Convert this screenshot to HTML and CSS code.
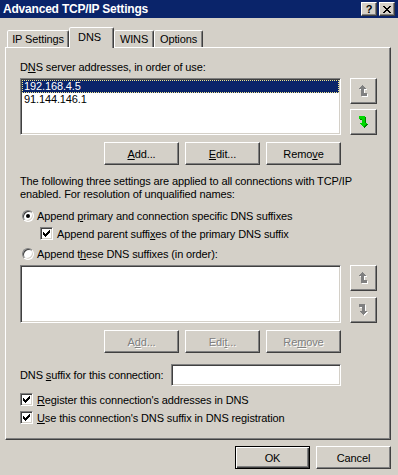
FILE: index.html
```html
<!DOCTYPE html>
<html lang="en">
<head>
  <meta charset="UTF-8">
  <title>Advanced TCP/IP Settings</title>
  <link rel="stylesheet" href="styles.css">
</head>
<body>
  <div class="dialog">
    <!-- Caption -->
    <div class="titlebar">
      <span class="title">Advanced TCP/IP Settings</span>
      <div class="caption-btns">
        <span class="cap-btn raised">?</span>
        <span class="cap-btn raised">
          <svg width="8" height="7" viewBox="0 0 8 7" shape-rendering="crispEdges"><path fill="#000" d="M0 0h2v1h-2zM6 0h2v1h-2zM1 1h2v1h-2zM5 1h2v1h-2zM2 2h4v1h-4zM3 3h2v1h-2zM2 4h4v1h-4zM1 5h2v1h-2zM5 5h2v1h-2zM0 6h2v1h-2zM6 6h2v1h-2z"/></svg>
        </span>
      </div>
    </div>

    <!-- Tabs -->
    <div class="tabs">
      <div class="tab tab-ip">IP Settings</div>
      <div class="tab tab-dns active">DNS</div>
      <div class="tab tab-wins">WINS</div>
      <div class="tab tab-opt">Options</div>
    </div>

    <div class="panel">
      <div class="label">D<u>N</u>S server addresses, in order of use:</div>
      <div class="list-row">
        <div class="listbox sunken">
          <div class="item selected">192.168.4.5</div>
          <div class="item">91.144.146.1</div>
        </div>
        <div class="arrows">
          <div class="arrow-btn raised">
            <svg width="9" height="12" viewBox="0 0 9 12" shape-rendering="crispEdges">
              <path fill="#fff" transform="translate(1 1)" d="M3 0h1v1h-1zM2 1h3v1h-3zM1 2h5v1h-5zM0 3h7v1h-7zM2 4h3v7h-3zM5 8h3v3h-3z"/>
              <path fill="#808080" d="M3 0h1v1h-1zM2 1h3v1h-3zM1 2h5v1h-5zM0 3h7v1h-7zM2 4h3v7h-3zM5 8h3v3h-3z"/>
            </svg>
          </div>
          <div class="arrow-btn raised">
            <svg width="9" height="12" viewBox="0 0 9 12" shape-rendering="crispEdges">
              <path fill="#008000" transform="translate(1 1) rotate(180 4 5.5)" d="M3 0h1v1h-1zM2 1h3v1h-3zM1 2h5v1h-5zM0 3h7v1h-7zM2 4h3v7h-3zM5 8h3v3h-3z"/>
              <path fill="#00d800" transform="rotate(180 4 5.5)" d="M3 0h1v1h-1zM2 1h3v1h-3zM1 2h5v1h-5zM0 3h7v1h-7zM2 4h3v7h-3zM5 8h3v3h-3z"/>
            </svg>
          </div>
        </div>
      </div>
      <div class="btn-row">
        <div class="btn raised"><u>A</u>dd...</div>
        <div class="btn raised"><u>E</u>dit...</div>
        <div class="btn raised">Remo<u>v</u>e</div>
      </div>

      <p class="note">The following three settings are applied to all connections with TCP/IP enabled. For resolution of unqualified names:</p>

      <div class="opt opt-radio">
        <span class="radio checked"></span>
        <span>Append <u>p</u>rimary and connection specific DNS suffixes</span>
      </div>
      <div class="opt opt-sub">
        <span class="check sunken">
          <svg width="7" height="7" viewBox="0 0 7 7" shape-rendering="crispEdges"><path d="M6 0h1v1h-1zM5 1h2v1h-2zM0 2h1v1h-1zM4 2h3v1h-3zM0 3h2v1h-2zM3 3h3v1h-3zM0 4h5v1h-5zM1 5h3v1h-3zM2 6h1v1h-1z"/></svg>
        </span>
        <span>Append parent suffi<u>x</u>es of the primary DNS suffix</span>
      </div>
      <div class="opt opt-radio opt-gap">
        <span class="radio"></span>
        <span>Append t<u>h</u>ese DNS suffixes (in order):</span>
      </div>

      <div class="list-row list-row-2">
        <div class="listbox listbox-2 sunken"></div>
        <div class="arrows arrows-2">
          <div class="arrow-btn raised">
            <svg width="9" height="12" viewBox="0 0 9 12" shape-rendering="crispEdges">
              <path fill="#fff" transform="translate(1 1)" d="M3 0h1v1h-1zM2 1h3v1h-3zM1 2h5v1h-5zM0 3h7v1h-7zM2 4h3v7h-3zM5 8h3v3h-3z"/>
              <path fill="#808080" d="M3 0h1v1h-1zM2 1h3v1h-3zM1 2h5v1h-5zM0 3h7v1h-7zM2 4h3v7h-3zM5 8h3v3h-3z"/>
            </svg>
          </div>
          <div class="arrow-btn raised">
            <svg width="9" height="12" viewBox="0 0 9 12" shape-rendering="crispEdges">
              <path fill="#fff" transform="translate(1 1) rotate(180 4 5.5)" d="M3 0h1v1h-1zM2 1h3v1h-3zM1 2h5v1h-5zM0 3h7v1h-7zM2 4h3v7h-3zM5 8h3v3h-3z"/>
              <path fill="#808080" transform="rotate(180 4 5.5)" d="M3 0h1v1h-1zM2 1h3v1h-3zM1 2h5v1h-5zM0 3h7v1h-7zM2 4h3v7h-3zM5 8h3v3h-3z"/>
            </svg>
          </div>
        </div>
      </div>
      <div class="btn-row">
        <div class="btn raised disabled">A<u>d</u>d...</div>
        <div class="btn raised disabled">Edi<u>t</u>...</div>
        <div class="btn raised disabled">Re<u>m</u>ove</div>
      </div>

      <div class="suffix-row">
        <span>DNS <u>s</u>uffix for this connection:</span>
        <div class="textbox sunken"></div>
      </div>

      <div class="opt opt-check">
        <span class="check sunken">
          <svg width="7" height="7" viewBox="0 0 7 7" shape-rendering="crispEdges"><path d="M6 0h1v1h-1zM5 1h2v1h-2zM0 2h1v1h-1zM4 2h3v1h-3zM0 3h2v1h-2zM3 3h3v1h-3zM0 4h5v1h-5zM1 5h3v1h-3zM2 6h1v1h-1z"/></svg>
        </span>
        <span><u>R</u>egister this connection's addresses in DNS</span>
      </div>
      <div class="opt opt-check opt-check-2">
        <span class="check sunken">
          <svg width="7" height="7" viewBox="0 0 7 7" shape-rendering="crispEdges"><path d="M6 0h1v1h-1zM5 1h2v1h-2zM0 2h1v1h-1zM4 2h3v1h-3zM0 3h2v1h-2zM3 3h3v1h-3zM0 4h5v1h-5zM1 5h3v1h-3zM2 6h1v1h-1z"/></svg>
        </span>
        <span><u>U</u>se this connection's DNS suffix in DNS registration</span>
      </div>
    </div>

    <div class="footer">
      <div class="btn default">OK</div>
      <div class="btn raised">Cancel</div>
    </div>
  </div>
</body>
</html>
```

FILE: styles.css
```css
/* Classic dialog look */
* {
  box-sizing: border-box;
}

body {
  margin: 0;
  font-family: "Liberation Sans", Arial, sans-serif;
  font-size: 11px;
  letter-spacing: -0.12px;
  color: #000;
  background: #d4d0c8;
}

.dialog {
  width: 398px;
  height: 475px;
  background: #d4d0c8;
  overflow: hidden;
}

/* 3D edges */
.raised {
  background: #d4d0c8;
  border: 1px solid;
  border-color: #fff #404040 #404040 #fff;
  box-shadow: inset -1px -1px #808080;
}

.sunken {
  background: #fff;
  border: 1px solid;
  border-color: #808080 #fff #fff #808080;
  box-shadow: inset 1px 1px #404040, inset -1px -1px #d4d0c8;
}

/* Title bar */
.titlebar {
  height: 18px;
  background: #0a246a;
  color: #fff;
  display: flex;
  align-items: center;
  justify-content: space-between;
  padding: 0 3px;
}

.title {
  font-weight: bold;
  font-size: 12px;
  letter-spacing: -0.2px;
}

.caption-btns {
  display: flex;
  gap: 2px;
}

.cap-btn {
  width: 16px;
  height: 14px;
  display: flex;
  align-items: center;
  justify-content: center;
  color: #000;
  font-weight: bold;
  font-size: 11px;
}

/* Tabs */
.tabs {
  display: flex;
  align-items: flex-end;
  height: 20px;
  margin-top: 9px;
  padding-left: 7px;
}

.tab {
  height: 17px;
  background: #d4d0c8;
  border: 1px solid;
  border-bottom: none;
  border-color: #fff #404040 transparent #fff;
  box-shadow: inset -1px 0 #808080;
  border-radius: 2px 2px 0 0;
  display: flex;
  align-items: center;
  justify-content: center;
}

.tab-ip { width: 62px; }
.tab-dns { width: 45px; padding-right: 4px; }
.tab-wins { width: 40px; }
.tab-opt { width: 49px; }

.tab.active {
  height: 21px;
  margin-bottom: -1px;
  position: relative;
  z-index: 1;
  padding-bottom: 2px;
}

/* Tab page */
.panel {
  margin-left: 5px;
  width: 386px;
  height: 393px;
  border: 1px solid;
  border-color: #fff #404040 #404040 #fff;
  box-shadow: inset -1px -1px #808080;
  padding: 13px 12px 0 14px;
}

.label {
  line-height: 13px;
}

.list-row {
  display: flex;
  gap: 9px;
  margin-top: 4px;
}

.list-row-2 {
  margin-top: 5px;
}

.listbox {
  width: 321px;
  height: 57px;
  padding: 1px;
}

.listbox-2 {
  height: 58px;
}

.item {
  line-height: 13px;
  height: 13px;
  padding-left: 2px;
}

.item.selected {
  background: #0a246a;
  color: #fff;
  outline: 1px dotted #f0e68c;
  outline-offset: -1px;
}

.arrows {
  display: flex;
  flex-direction: column;
  gap: 5px;
}

.arrows-2 {
  gap: 6px;
}

.arrow-btn {
  width: 27px;
  height: 26px;
  display: flex;
  align-items: center;
  justify-content: center;
}

/* Push buttons */
.btn-row {
  width: 321px;
  display: flex;
  justify-content: flex-end;
  gap: 6px;
  margin-top: 7px;
}

.btn {
  width: 75px;
  height: 23px;
  display: flex;
  align-items: center;
  justify-content: center;
}

.btn.default {
  background: #d4d0c8;
  border: 1px solid #000;
  box-shadow: inset 1px 1px #fff, inset -1px -1px #404040, inset -2px -2px #808080;
}

.disabled {
  color: #808080;
  text-shadow: 1px 1px 0 #fff;
}

.note {
  margin: 10px 0 0;
  line-height: 13px;
}

/* Radio and check rows */
.opt {
  display: flex;
  align-items: center;
  height: 13px;
}

.opt-radio {
  margin-top: 8px;
  padding-left: 2px;
  gap: 3px;
}

.opt-gap {
  margin-top: 7px;
}

.opt-sub {
  margin-top: 5px;
  padding-left: 20px;
  gap: 4px;
}

.opt-check {
  margin-top: 7px;
  gap: 4px;
}

.opt-check-2 {
  margin-top: 5px;
}

.radio {
  width: 12px;
  height: 12px;
  border-radius: 50%;
  background: #fff;
  border: 1px solid;
  border-color: #808080 #fff #fff #808080;
  box-shadow: inset 1px 1px #404040, inset -1px -1px #d4d0c8;
  display: flex;
  align-items: center;
  justify-content: center;
  flex-shrink: 0;
}

.radio.checked::after {
  content: "";
  width: 4px;
  height: 4px;
  border-radius: 50%;
  background: #000;
}

.check {
  width: 13px;
  height: 13px;
  display: flex;
  align-items: center;
  justify-content: center;
  flex-shrink: 0;
}

.suffix-row {
  width: 321px;
  display: flex;
  align-items: center;
  justify-content: space-between;
  margin-top: 11px;
}

.textbox {
  width: 170px;
  height: 22px;
}

/* Footer */
.footer {
  display: flex;
  justify-content: flex-end;
  gap: 6px;
  padding-right: 7px;
  margin-top: 6px;
}
```
